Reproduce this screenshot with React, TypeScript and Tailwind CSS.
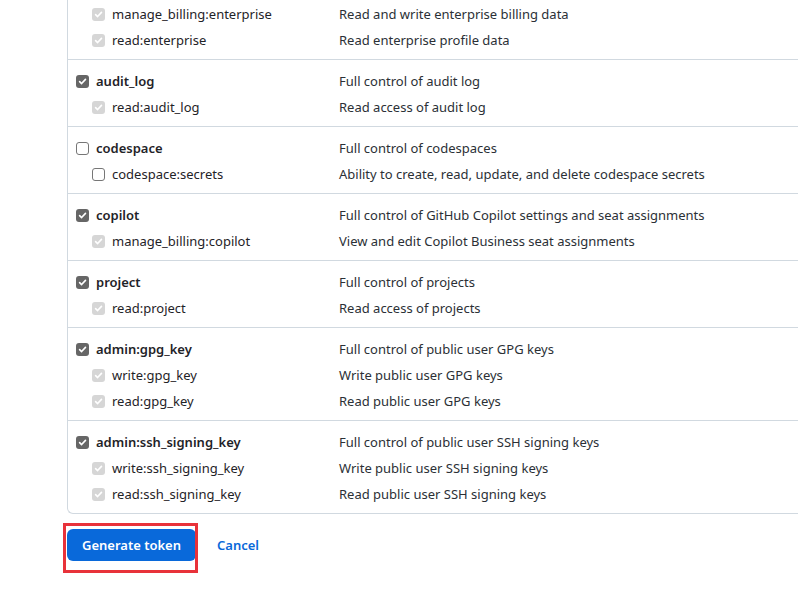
import React from "react";

type Scope = { name: string; desc: string; state: "on" | "off" | "sub" };
type Group = { top?: Scope; subs: Scope[] };

const groups: Group[] = [
  {
    subs: [
      { name: "manage_billing:enterprise", desc: "Read and write enterprise billing data", state: "sub" },
      { name: "read:enterprise", desc: "Read enterprise profile data", state: "sub" },
    ],
  },
  {
    top: { name: "audit_log", desc: "Full control of audit log", state: "on" },
    subs: [{ name: "read:audit_log", desc: "Read access of audit log", state: "sub" }],
  },
  {
    top: { name: "codespace", desc: "Full control of codespaces", state: "off" },
    subs: [
      { name: "codespace:secrets", desc: "Ability to create, read, update, and delete codespace secrets", state: "off" },
    ],
  },
  {
    top: { name: "copilot", desc: "Full control of GitHub Copilot settings and seat assignments", state: "on" },
    subs: [{ name: "manage_billing:copilot", desc: "View and edit Copilot Business seat assignments", state: "sub" }],
  },
  {
    top: { name: "project", desc: "Full control of projects", state: "on" },
    subs: [{ name: "read:project", desc: "Read access of projects", state: "sub" }],
  },
  {
    top: { name: "admin:gpg_key", desc: "Full control of public user GPG keys", state: "on" },
    subs: [
      { name: "write:gpg_key", desc: "Write public user GPG keys", state: "sub" },
      { name: "read:gpg_key", desc: "Read public user GPG keys", state: "sub" },
    ],
  },
  {
    top: { name: "admin:ssh_signing_key", desc: "Full control of public user SSH signing keys", state: "on" },
    subs: [
      { name: "write:ssh_signing_key", desc: "Write public user SSH signing keys", state: "sub" },
      { name: "read:ssh_signing_key", desc: "Read public user SSH signing keys", state: "sub" },
    ],
  },
];

function Box({ state }: { state: Scope["state"] }) {
  if (state === "off") {
    return <span className="h-[13px] w-[13px] shrink-0 rounded-[3px] border border-[#767676] bg-white" />;
  }
  return (
    <span
      className={
        "flex h-[13px] w-[13px] shrink-0 items-center justify-center rounded-[3px] " +
        (state === "on" ? "bg-[#666666]" : "bg-[#d6d6d6]")
      }
    >
      <svg width="9" height="9" viewBox="0 0 10 10" fill="none">
        <path d="M1.8 5.2 4 7.3 8.3 2.6" stroke="white" strokeWidth="1.8" strokeLinecap="round" strokeLinejoin="round" />
      </svg>
    </span>
  );
}

function Row({ scope, sub }: { scope: Scope; sub?: boolean }) {
  return (
    <div className="grid h-[26px] grid-cols-[263px_1fr] items-center">
      <label className={"flex items-center gap-[7px] " + (sub ? "pl-4" : "")}>
        <Box state={scope.state} />
        <span className={sub ? "" : "font-semibold"}>{scope.name}</span>
      </label>
      <span className="whitespace-nowrap text-[#2b3036]">{scope.desc}</span>
    </div>
  );
}

export default function App() {
  return (
    <div
      className="relative h-[603px] w-full overflow-hidden bg-white text-[13px] leading-5 text-[#1f2328]"
      style={{ fontFamily: '"Noto Sans", "Liberation Sans", sans-serif' }}
    >
      <div className="ml-[67px] w-[760px] rounded-bl-md border-b border-l border-[#d1d9e0]">
        {groups.map((g, i) => (
          <div
            key={i}
            className={"px-2 pb-[6px] " + (i === 0 ? "pt-px" : "border-t border-[#d1d9e0] pt-2")}
          >
            {g.top && <Row scope={g.top} />}
            {g.subs.map((s) => (
              <Row key={s.name} scope={s} sub />
            ))}
          </div>
        ))}
      </div>

      <div className="mt-[15px] flex items-center gap-[21px] pl-[67px]">
        <button className="flex h-8 w-[129px] items-center justify-center rounded-md bg-[#0969da] font-semibold text-white">
          Generate token
        </button>
        <a className="font-semibold text-[#0969da]">Cancel</a>
      </div>

      <div className="pointer-events-none absolute left-[63px] top-[523px] h-[50px] w-[135px] border-[3px] border-[#e8323a]" />
    </div>
  );
}
